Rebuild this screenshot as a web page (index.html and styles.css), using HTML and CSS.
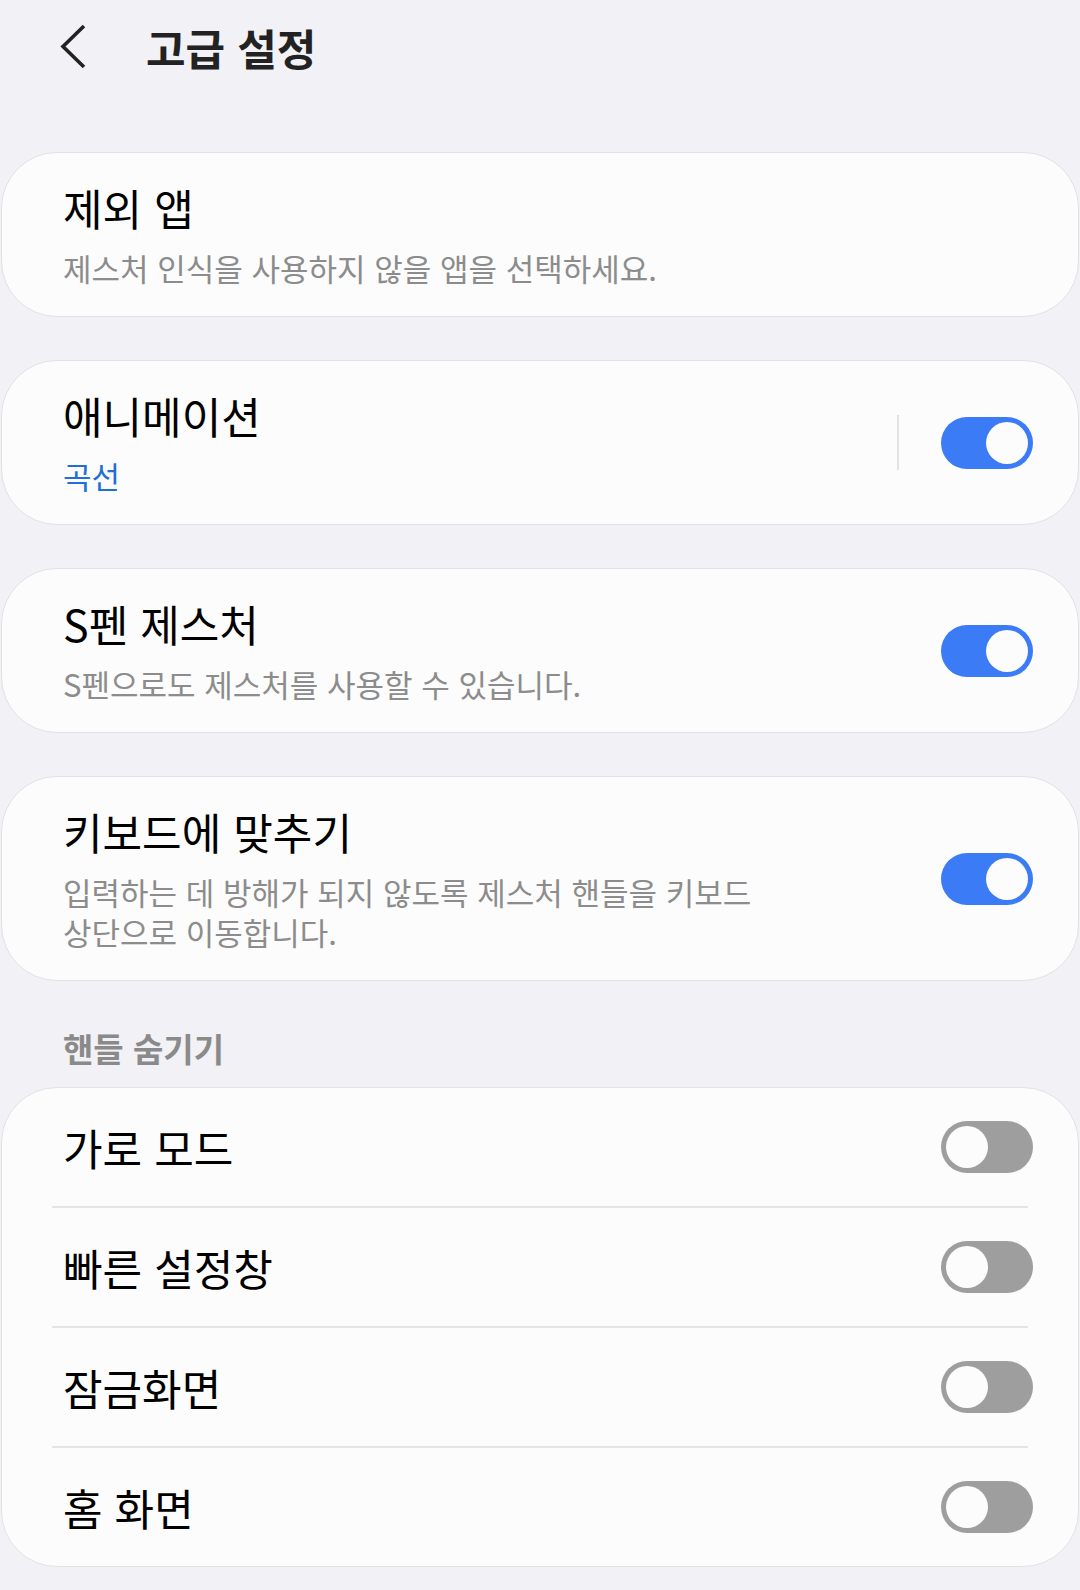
FILE: index.html
```html
<!DOCTYPE html>
<html lang="ko">
<head>
    <meta charset="UTF-8">
    <meta name="viewport" content="width=device-width, initial-scale=1.0">
    <title>고급 설정</title>
    <link rel="stylesheet" href="styles.css">
</head>
<body>
    <header class="topbar">
        <a class="back-btn" href="#">
            <svg width="32" height="48" viewBox="0 0 32 48">
                <polyline points="26,3 5,23.5 26,44" fill="none" stroke="#222" stroke-width="3.6"/>
            </svg>
        </a>
        <h1>고급 설정</h1>
    </header>

    <div class="content">
        <div class="card">
            <div class="text">
                <div class="title">제외 앱</div>
                <div class="summary">제스처 인식을 사용하지 않을 앱을 선택하세요.</div>
            </div>
        </div>

        <div class="card">
            <div class="text">
                <div class="title">애니메이션</div>
                <div class="summary accent">곡선</div>
            </div>
            <span class="v-divider"></span>
            <span class="switch on"><span class="knob"></span></span>
        </div>

        <div class="card">
            <div class="text">
                <div class="title">S펜 제스처</div>
                <div class="summary">S펜으로도 제스처를 사용할 수 있습니다.</div>
            </div>
            <span class="switch on"><span class="knob"></span></span>
        </div>

        <div class="card">
            <div class="text">
                <div class="title">키보드에 맞추기</div>
                <div class="summary">입력하는 데 방해가 되지 않도록 제스처 핸들을 키보드<br>상단으로 이동합니다.</div>
            </div>
            <span class="switch on"><span class="knob"></span></span>
        </div>

        <h2 class="section-title">핸들 숨기기</h2>
        <div class="card group">
            <div class="row">
                <div class="title">가로 모드</div>
                <span class="switch"><span class="knob"></span></span>
            </div>
            <div class="divider"></div>
            <div class="row">
                <div class="title">빠른 설정창</div>
                <span class="switch"><span class="knob"></span></span>
            </div>
            <div class="divider"></div>
            <div class="row">
                <div class="title">잠금화면</div>
                <span class="switch"><span class="knob"></span></span>
            </div>
            <div class="divider"></div>
            <div class="row">
                <div class="title">홈 화면</div>
                <span class="switch"><span class="knob"></span></span>
            </div>
        </div>
    </div>
</body>
</html>
```

FILE: styles.css
```css
body {
    font-family: "Noto Sans CJK KR", "Noto Sans", sans-serif;
    margin: 0;
    padding: 0;
    background-color: #f1f1f6;
    color: #000;
}
.topbar {
    display: flex;
    align-items: center;
    height: 94px;
    padding-left: 58px;
}
.back-btn {
    display: flex;
}
h1 {
    margin: 0 0 0 56px;
    font-size: 43px;
    font-weight: 700;
    color: #222;
    line-height: 1;
}
.content {
    padding-top: 58px;
}
.card {
    display: flex;
    align-items: center;
    margin: 0 1px 43px;
    padding: 28px 45px 28px 61px;
    background-color: #fcfcfc;
    border: 1px solid #e2e2e6;
    border-radius: 56px;
}
.text {
    flex: 1;
}
.title {
    font-size: 43px;
    line-height: 52px;
}
.summary {
    margin-top: 15px;
    font-size: 31px;
    line-height: 40px;
    color: #8c8c8c;
}
.summary.accent {
    color: #1f6fd6;
}
.v-divider {
    width: 2px;
    height: 55px;
    margin-right: 42px;
    background-color: #e2e2e2;
}
.switch {
    display: flex;
    align-items: center;
    flex-shrink: 0;
    box-sizing: border-box;
    width: 92px;
    height: 52px;
    padding: 0 5px;
    border-radius: 26px;
    background-color: #9e9e9e;
}
.switch .knob {
    width: 42px;
    height: 42px;
    border-radius: 50%;
    background-color: #fcfcfc;
}
.switch.on {
    justify-content: flex-end;
    background-color: #3b7cf6;
}
.section-title {
    margin: 47px 0 19px 63px;
    font-size: 33px;
    font-weight: 700;
    line-height: 40px;
    color: #8a8a8a;
}
.card.group {
    display: block;
    padding: 0;
    margin-bottom: 0;
}
.row {
    display: flex;
    align-items: center;
    justify-content: space-between;
    height: 118px;
    padding: 0 45px 0 61px;
}
.divider {
    height: 2px;
    margin: 0 50px;
    background-color: #e4e4e4;
}
```
